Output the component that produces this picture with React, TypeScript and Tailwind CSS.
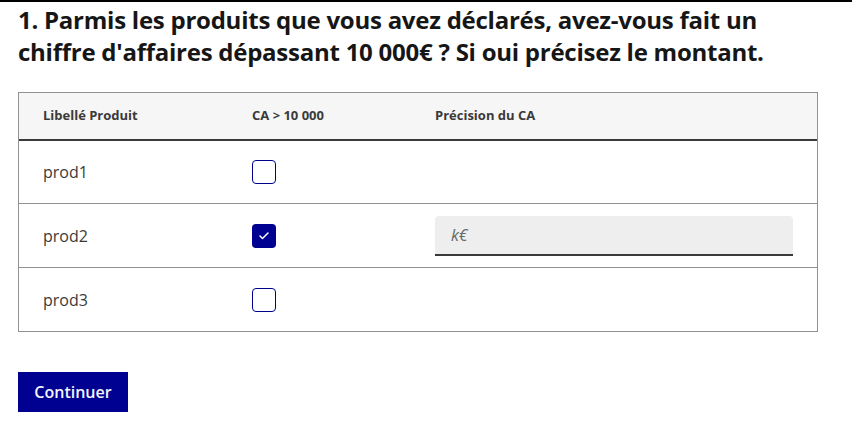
import { Check } from "lucide-react";

const rows = [
  { label: "prod1", checked: false },
  { label: "prod2", checked: true },
  { label: "prod3", checked: false },
];

export default function App() {
  return (
    <div className="min-h-screen bg-white font-['Open_Sans',sans-serif] text-[#161616]">
      <div className="h-[2px] bg-black" />
      <div className="px-[18px]">
        <h2 className="mt-[2px] text-[24px] font-bold leading-[32px] tracking-[-0.25px]">
          1. Parmis les produits que vous avez déclarés, avez-vous fait un
          <br />
          chiffre d'affaires dépassant 10 000€ ? Si oui précisez le montant.
        </h2>

        {/* Table */}
        <div className="mt-[24px] w-[800px] border border-[#929292]">
          <div className="flex h-[48px] items-center border-b-2 border-[#3a3a3a] bg-[#f6f6f6] text-[13px] font-bold text-[#3a3a3a]">
            <div className="w-[209px] pl-6">Libellé Produit</div>
            <div className="w-[183px] pl-6">CA &gt; 10 000</div>
            <div className="flex-1 pl-6">Précision du CA</div>
          </div>
          {rows.map((r, i) => (
            <div
              key={r.label}
              className={`flex items-center ${i > 0 ? "h-[64px] border-t border-[#929292]" : "h-[62px]"}`}
            >
              <div className="w-[209px] pl-6 text-[16px] font-medium text-[#3a3a3a]">{r.label}</div>
              <div className="w-[183px] pl-6">
                {r.checked ? (
                  <div className="flex h-6 w-6 items-center justify-center rounded bg-[#000091]">
                    <Check className="h-[12px] w-[12px] text-white" strokeWidth={3} />
                  </div>
                ) : (
                  <div className="h-6 w-6 rounded border border-[#000091] bg-white" />
                )}
              </div>
              <div className="flex-1 px-6">
                {r.checked && (
                  <input
                    placeholder="k€"
                    className="h-[40px] w-full rounded-t border-b-2 border-[#3a3a3a] bg-[#eeeeee] px-4 text-[16px] italic outline-none placeholder:text-[#666666]"
                  />
                )}
              </div>
            </div>
          ))}
        </div>

        <button className="mt-[40px] h-[40px] w-[110px] bg-[#000091] text-[16px] font-semibold text-[#f5f5fe]">
          Continuer
        </button>
      </div>
    </div>
  );
}
